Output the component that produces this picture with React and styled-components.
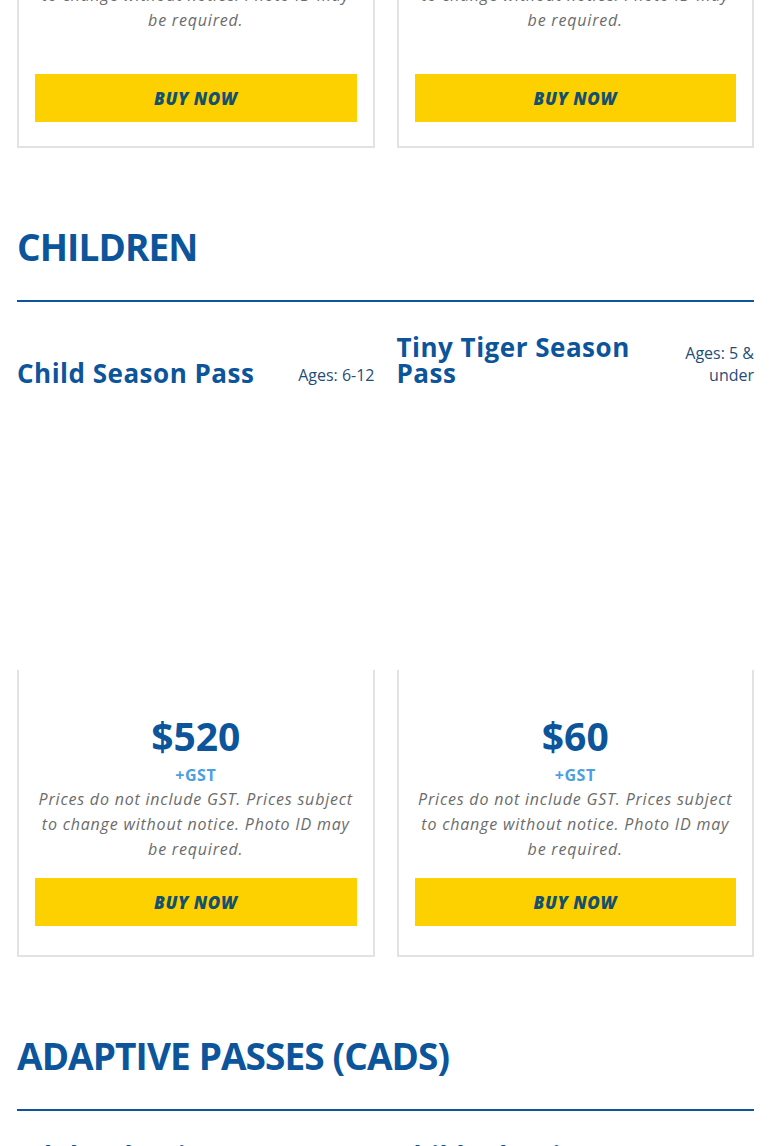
import React from 'react'
import styled, { createGlobalStyle } from 'styled-components'

const GlobalStyle = createGlobalStyle`
  html, body {
    margin: 0;
    padding: 0;
    background: #ffffff;
    font-family: "Open Sans", "Liberation Sans", sans-serif;
    overflow: hidden;
  }
`

const Page = styled.div`
  width: 737px;
  margin: -42px 0 0 17px;
`

const Section = styled.section`
  padding-bottom: 75px;
`

const SectionTitle = styled.h2`
  margin: 0;
  font-size: 37px;
  line-height: 48px;
  font-weight: 700;
  letter-spacing: -0.9px;
  text-transform: uppercase;
  color: #0c559b;
`

const Rule = styled.hr`
  margin: 29px 0 32px;
  border: 0;
  height: 2px;
  background: #0c559b;
`

const Grid = styled.div`
  display: grid;
  grid-template-columns: 1fr 1fr;
  column-gap: 22px;
`

const Column = styled.div`
  display: flex;
  flex-direction: column;
`

const Header = styled.div`
  display: flex;
  align-items: flex-end;
  justify-content: space-between;
  gap: 16px;
  min-height: 52px;
`

const PassName = styled.h3`
  margin: 0;
  font-size: 26px;
  line-height: 26px;
  font-weight: 700;
  letter-spacing: 0.5px;
  color: #0c559b;
`

const Ages = styled.span`
  flex-shrink: 0;
  max-width: ${p => (p.$narrow ? '80px' : 'none')};
  font-size: 16px;
  line-height: 22px;
  text-align: right;
  color: #1f4e79;
`

const ImageSpace = styled.div`
  height: 284px;
`

const Card = styled.div`
  display: flex;
  flex-direction: column;
  align-items: center;
  border: 2px solid #e2e2e2;
  border-top: 0;
  padding: ${p => (p.$tail ? '0 16px 24px' : '42px 16px 29px')};
  text-align: center;
`

const Price = styled.div`
  font-size: 39px;
  line-height: 48px;
  font-weight: 700;
  color: #0c559b;
`

const Gst = styled.div`
  margin-top: 5px;
  font-size: 16px;
  line-height: 20px;
  font-weight: 700;
  letter-spacing: 0.6px;
  color: #4aa0e2;
`

const Note = styled.p`
  margin: ${p => (p.$flush ? '0' : '2px 0 0')};
  font-size: 16px;
  line-height: 25px;
  font-style: italic;
  letter-spacing: 0.8px;
  color: #6b6b6b;
`

const BuyButton = styled.button`
  align-self: stretch;
  margin-top: ${p => (p.$gap ? p.$gap : 16)}px;
  height: 48px;
  border: 0;
  background: #fdd000;
  font-family: inherit;
  font-size: 17px;
  font-weight: 800;
  font-style: italic;
  letter-spacing: 0.6px;
  color: #14506f;
  cursor: pointer;
`

const note = 'Prices do not include GST. Prices subject to change without notice. Photo ID may be required.'

const children = [
  { name: 'Child Season Pass', ages: 'Ages: 6-12', price: '$520' },
  { name: 'Tiny Tiger Season Pass', ages: 'Ages: 5 & under', price: '$60', narrow: true },
]

const adaptive = [
  { name: 'Adult Adaptive Season Pass', ages: 'Ages: 19-64' },
  { name: 'Child Adaptive Season Pass', ages: 'Ages: 6-12' },
]

function PassCard({ pass }) {
  return (
    <Column>
      <Header>
        <PassName>{pass.name}</PassName>
        <Ages $narrow={pass.narrow}>{pass.ages}</Ages>
      </Header>
      <ImageSpace />
      <Card>
        <Price>{pass.price}</Price>
        <Gst>+GST</Gst>
        <Note>{note}</Note>
        <BuyButton>BUY NOW</BuyButton>
      </Card>
    </Column>
  )
}

export default function App() {
  return (
    <>
      <GlobalStyle />
      <Page>
        <Section>
          <Grid>
            {[0, 1].map(i => (
              <Card key={i} $tail>
                <Note $flush>{note}</Note>
                <BuyButton $gap={41}>BUY NOW</BuyButton>
              </Card>
            ))}
          </Grid>
        </Section>

        <Section>
          <SectionTitle>Children</SectionTitle>
          <Rule />
          <Grid>
            {children.map(p => (
              <PassCard key={p.name} pass={p} />
            ))}
          </Grid>
        </Section>

        <Section>
          <SectionTitle>Adaptive Passes (CADS)</SectionTitle>
          <Rule />
          <Grid>
            {adaptive.map(p => (
              <Header key={p.name}>
                <PassName>{p.name}</PassName>
                <Ages>{p.ages}</Ages>
              </Header>
            ))}
          </Grid>
        </Section>
      </Page>
    </>
  )
}
